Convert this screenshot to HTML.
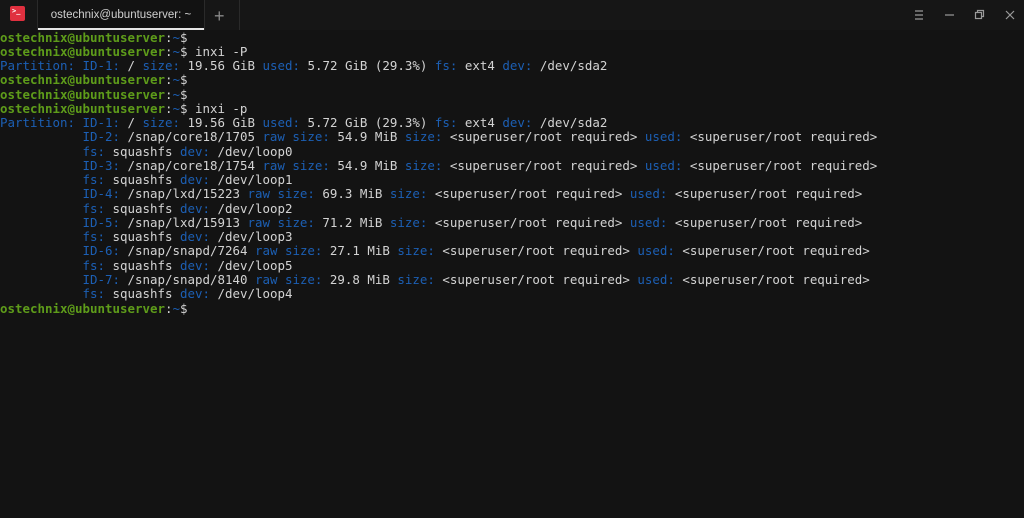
<!DOCTYPE html>
<html><head><meta charset="utf-8"><style>
html,body{margin:0;padding:0;width:1024px;height:518px;background:#131313;overflow:hidden}
.bar{position:absolute;left:0;top:0;width:1024px;height:30px;background:#161616}
.tab{position:absolute;left:37px;top:0;width:166px;height:30px;background:#121212;border-right:1px solid #2a2a2a;border-left:1px solid #2a2a2a;font:11.5px "Liberation Sans",sans-serif;color:#d0d0d0;line-height:30px;text-align:center}
.tab:after{content:"";position:absolute;left:0;right:0;bottom:0;height:2px;background:#e6e6e6}
.icon{position:absolute;left:10px;top:6px;width:15px;height:15px;background:#e0303f;border-radius:2px;color:#fff;font:bold 7px "DejaVu Sans Mono",monospace;line-height:10px;padding-left:2px;box-sizing:border-box}
.plus{position:absolute;left:214px;top:6px;color:#888;font:300 18px "Liberation Sans",sans-serif}
.sep{position:absolute;left:239px;top:0;width:1px;height:30px;background:#2a2a2a}
pre{position:absolute;left:0;top:30.5px;margin:0;font:12.46px "DejaVu Sans Mono",monospace;line-height:14.26px;color:#d3d3d3}
.g{color:#5e9c1a;font-weight:bold}.b{color:#1c5fb4}
</style></head><body>
<div class="bar"></div>
<div class="icon">&gt;_</div>
<div class="tab">ostechnix@ubuntuserver: ~</div>
<div class="plus">+</div>
<div class="sep"></div>
<svg style="position:absolute;left:880px;top:0" width="144" height="30">
<g stroke="#9a9a9a" stroke-width="1.2" fill="none">
<path d="M35 11h8M35 15h8M35 19h8"/>
<path d="M65 15h9"/>
<rect x="95.5" y="12.5" width="6" height="6"/><path d="M97.5 12.5v-2h6v6h-2"/>
<path d="M126 11l8 8M134 11l-8 8"/>
</g></svg>
<pre><span class="g">ostechnix@ubuntuserver</span>:<span class="b">~</span>$
<span class="g">ostechnix@ubuntuserver</span>:<span class="b">~</span>$ inxi -P
<span class="b">Partition: ID-1:</span> / <span class="b">size:</span> 19.56 GiB <span class="b">used:</span> 5.72 GiB (29.3%) <span class="b">fs:</span> ext4 <span class="b">dev:</span> /dev/sda2
<span class="g">ostechnix@ubuntuserver</span>:<span class="b">~</span>$
<span class="g">ostechnix@ubuntuserver</span>:<span class="b">~</span>$
<span class="g">ostechnix@ubuntuserver</span>:<span class="b">~</span>$ inxi -p
<span class="b">Partition: ID-1:</span> / <span class="b">size:</span> 19.56 GiB <span class="b">used:</span> 5.72 GiB (29.3%) <span class="b">fs:</span> ext4 <span class="b">dev:</span> /dev/sda2
           <span class="b">ID-2:</span> /snap/core18/1705 <span class="b">raw size:</span> 54.9 MiB <span class="b">size:</span> &lt;superuser/root required&gt; <span class="b">used:</span> &lt;superuser/root required&gt;
           <span class="b">fs:</span> squashfs <span class="b">dev:</span> /dev/loop0
           <span class="b">ID-3:</span> /snap/core18/1754 <span class="b">raw size:</span> 54.9 MiB <span class="b">size:</span> &lt;superuser/root required&gt; <span class="b">used:</span> &lt;superuser/root required&gt;
           <span class="b">fs:</span> squashfs <span class="b">dev:</span> /dev/loop1
           <span class="b">ID-4:</span> /snap/lxd/15223 <span class="b">raw size:</span> 69.3 MiB <span class="b">size:</span> &lt;superuser/root required&gt; <span class="b">used:</span> &lt;superuser/root required&gt;
           <span class="b">fs:</span> squashfs <span class="b">dev:</span> /dev/loop2
           <span class="b">ID-5:</span> /snap/lxd/15913 <span class="b">raw size:</span> 71.2 MiB <span class="b">size:</span> &lt;superuser/root required&gt; <span class="b">used:</span> &lt;superuser/root required&gt;
           <span class="b">fs:</span> squashfs <span class="b">dev:</span> /dev/loop3
           <span class="b">ID-6:</span> /snap/snapd/7264 <span class="b">raw size:</span> 27.1 MiB <span class="b">size:</span> &lt;superuser/root required&gt; <span class="b">used:</span> &lt;superuser/root required&gt;
           <span class="b">fs:</span> squashfs <span class="b">dev:</span> /dev/loop5
           <span class="b">ID-7:</span> /snap/snapd/8140 <span class="b">raw size:</span> 29.8 MiB <span class="b">size:</span> &lt;superuser/root required&gt; <span class="b">used:</span> &lt;superuser/root required&gt;
           <span class="b">fs:</span> squashfs <span class="b">dev:</span> /dev/loop4
<span class="g">ostechnix@ubuntuserver</span>:<span class="b">~</span>$</pre>
</body></html>
